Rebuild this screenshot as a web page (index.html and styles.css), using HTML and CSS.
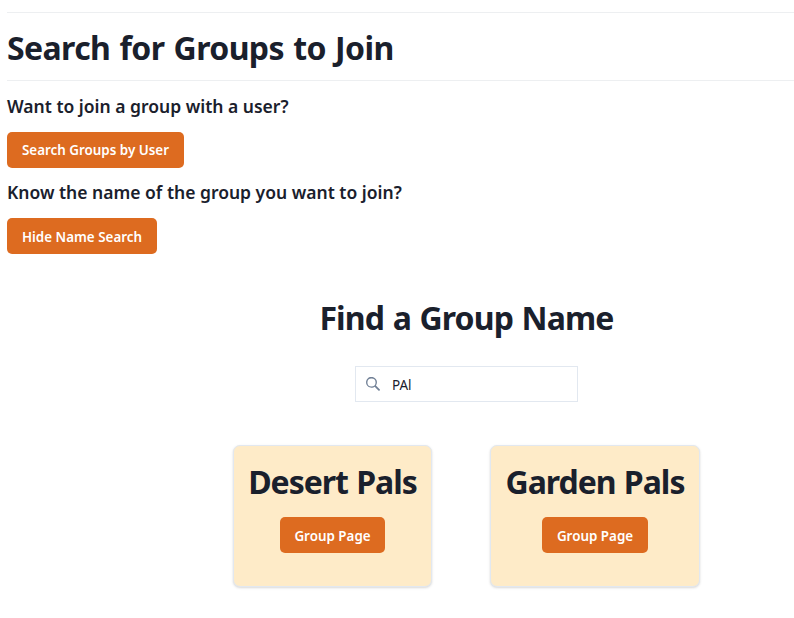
FILE: index.html
```html
<!DOCTYPE html>
<html lang="en">
<head>
<meta charset="utf-8">
<title>Search for Groups</title>
<link rel="stylesheet" href="styles.css">
</head>
<body>
<main class="page">
  <hr class="divider">
  <h1 class="title main-title">Search for Groups to Join</h1>
  <hr class="divider">
  <h2 class="prompt">Want to join a group with a user?</h2>
  <button class="btn btn-user">Search Groups by User</button>
  <h2 class="prompt prompt-name">Know the name of the group you want to join?</h2>
  <button class="btn btn-name">Hide Name Search</button>
  <section class="finder">
    <h1 class="title finder-title">Find a Group Name</h1>
    <label class="search">
      <svg class="search-icon" viewBox="0 0 24 24"><path d="M23.4 20.9l-6.4-6.4a9.3 9.3 0 1 0-2.2 2.2l6.4 6.4a1.55 1.55 0 0 0 2.2-2.2zM9.4 2.4a7 7 0 1 1 0 14 7 7 0 0 1 0-14z" fill="#718096"/></svg>
      <span class="query">PAl</span>
    </label>
    <div class="cards">
      <article class="card card-desert"><h1 class="title">Desert Pals</h1><button class="btn">Group Page</button></article>
      <article class="card card-garden"><h1 class="title">Garden Pals</h1><button class="btn">Group Page</button></article>
    </div>
  </section>
</main>
</body>
</html>
```
FILE: styles.css
```css
* { box-sizing: border-box; margin: 0; }
body { background: #fff; color: #1a202c; font-family: "Noto Sans", "Open Sans", sans-serif; }
.page { min-height: 618px; padding: 12px 0 0 7px; }
.divider { border: 0; border-top: 1px solid #edeff1; }
.title { font-size: 32px; line-height: 67px; font-weight: 700; letter-spacing: -1.02px; word-spacing: 1px; white-space: nowrap; }
.main-title { letter-spacing: -0.6px; word-spacing: 1.5px; padding-top: 2px; line-height: 65px; }
.prompt { font-size: 17.5px; line-height: 51px; font-weight: 600; white-space: nowrap; }
.prompt-name { line-height: 49px; padding-bottom: 1px; }
.btn { display: block; height: 36px; padding: 0; border: 0; border-radius: 5px; background: #dd6b20; color: #fff; font: 600 13.4px "Noto Sans", sans-serif; white-space: nowrap; }
.btn-user { width: 177px; }
.btn-name { width: 150px; padding-top: 1px; }
.finder { width: 467px; margin: 31px 0 0 226px; display: flex; flex-direction: column; align-items: center; }
.finder-title { line-height: 65px; margin-bottom: 2px; letter-spacing: -0.85px; }
.search { width: 223px; height: 36px; margin-top: 14px; border: 1px solid #e2e8f0; display: flex; align-items: center; padding-left: 10px; }
.search-icon { width: 14px; height: 14px; margin-top: -1px; }
.query { margin: 1px 0 0 12px; font-size: 13.5px; font-weight: 400; }
.cards { width: 100%; margin-top: 43px; display: flex; justify-content: space-between; }
.card { height: 142px; border: 1px solid #e2e8f0; border-radius: 7px; background: #feebc8; box-shadow: 0 1px 3px #0000001a, 0 1px 2px #0000000f; display: flex; flex-direction: column; align-items: center; padding-top: 3px; }
.card-desert { width: 199px; }
.card-garden { width: 210px; }
.card .title { line-height: 66px; }
.card .btn { width: 106px; margin-top: 2px; padding-top: 2px; }
.card-desert .btn { width: 105px; }
```
